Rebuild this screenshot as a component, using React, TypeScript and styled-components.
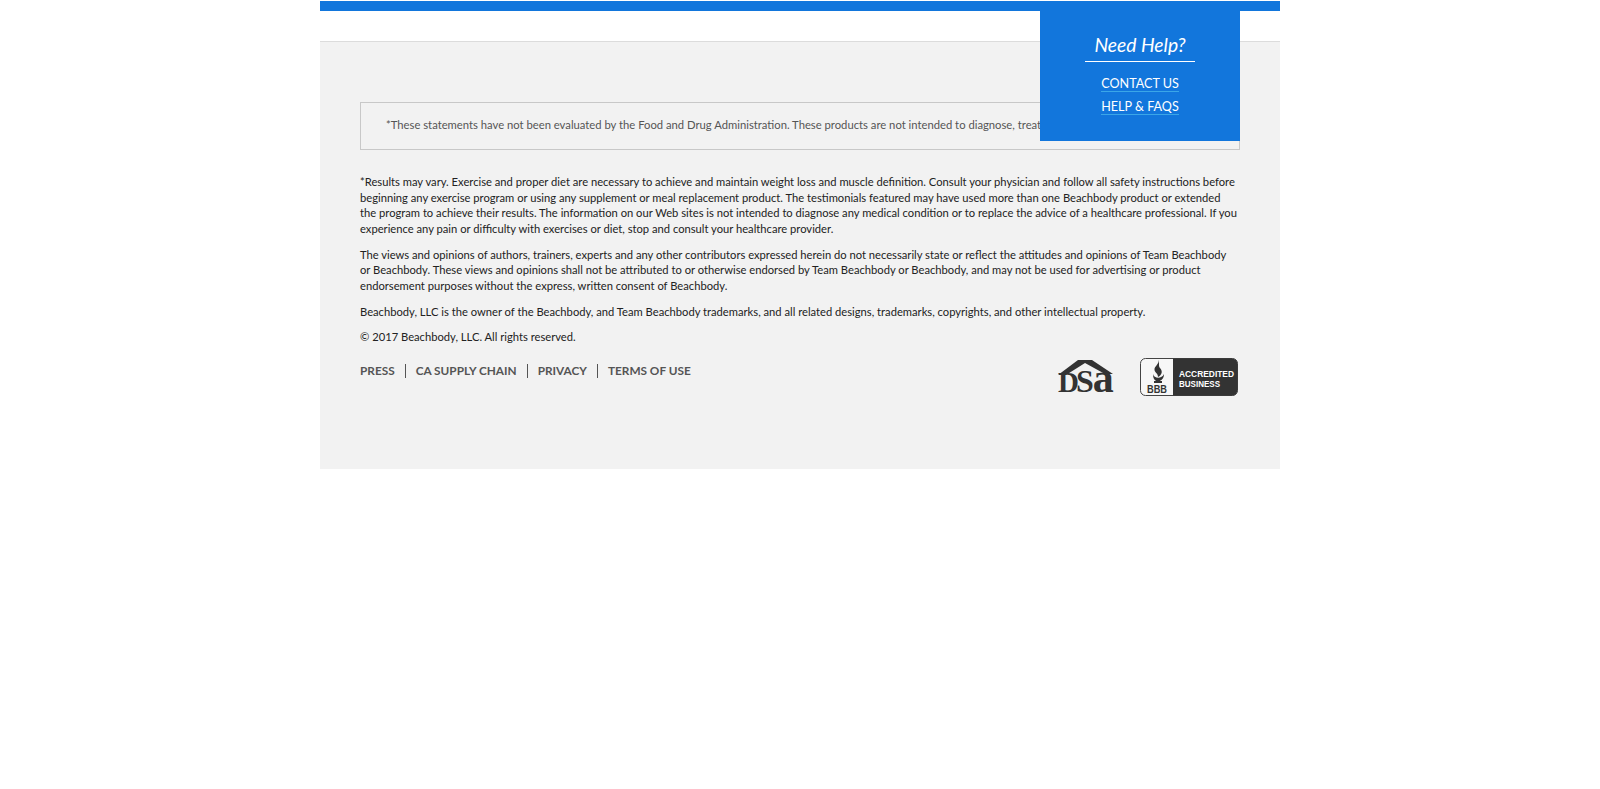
import React from "react";
import styled, { createGlobalStyle } from "styled-components";

const Global = createGlobalStyle`
  html, body { margin: 0; padding: 0; background: #fff; }
  body { font-family: Lato, "Liberation Sans", sans-serif; }
`;
const Page = styled.div`
  width: 960px;
  margin: 1px auto 0;
`;
const TopBar = styled.div`
  height: 10px;
  background: #1276dc;
`;
const Header = styled.div`
  height: 30px;
  background: #fff;
`;
const Footer = styled.footer`
  position: relative;
  box-sizing: border-box;
  height: 428px;
  background: #f2f2f2;
  border-top: 1px solid #dcdcdc;
  padding: 60px 40px 0;
`;
const HelpBox = styled.aside`
  position: absolute;
  top: -31px;
  right: 40px;
  box-sizing: border-box;
  width: 200px;
  height: 130px;
  background: #1276dc;
  color: #fff;
  display: flex;
  flex-direction: column;
  align-items: center;
  padding-top: 23px;
`;
const HelpTitle = styled.div`
  width: 110px;
  height: 27px;
  border-bottom: 1px solid #fff;
  text-align: center;
  font-size: 19.3px;
  line-height: 22px;
  font-style: italic;
`;
const HelpLink = styled.a`
  color: #fff;
  font-size: 12.6px;
  line-height: 15px;
  border-bottom: 1px solid #3aa6e8;
  margin-top: 7px;
  &:first-of-type { margin-top: 14px; }
`;
const Disclaimer = styled.div`
  box-sizing: border-box;
  height: 48px;
  border: 1px solid #c8c8c8;
  padding: 14px 25px;
  font-size: 11.25px;
  line-height: 16px;
  color: #555;
  white-space: nowrap;
  overflow: hidden;
`;
const Legal = styled.div`
  margin-top: 24px;
  padding-right: 3px;
  color: #222;
  font-size: 11.2px;
  line-height: 15.7px;
`;
const Para = styled.p`
  margin: 0 0 9.8px;
`;
const BottomRow = styled.div`
  display: flex;
  justify-content: space-between;
  margin-top: 13px;
`;
const Nav = styled.nav`
  display: flex;
  align-items: center;
  height: 14px;
  margin-top: 6px;
`;
const NavLink = styled.a<{ $first?: boolean }>`
  font-size: 11.8px;
  font-weight: 700;
  line-height: 14px;
  color: #555;
  padding: 0 10px;
  ${(p) => (p.$first ? "padding-left: 0;" : "border-left: 1px solid #555;")}
`;
const Badges = styled.div`
  display: flex;
  align-items: flex-start;
  gap: 21px;
  padding-right: 2px;
`;

const DsaLogo = () => (
  <svg width="62" height="52" viewBox="0 0 62 52">
    <path d="M1 17 L21 2 H35 L56 16 H48 L28 5 L9 17Z" fill="#333" />
    <text x="1" y="34" fontFamily="Liberation Serif, serif" fontWeight="700" fill="#333" fontSize="29">
      D<tspan dx="-3" fontSize="32">S</tspan><tspan dx="-1" fontSize="42">a</tspan>
    </text>
  </svg>
);
const BbbLogo = () => (
  <svg width="98" height="38" viewBox="0 0 98 38">
    <rect x="0.5" y="0.5" width="97" height="37" rx="5" fill="#f7f7f7" stroke="#444" />
    <path d="M33 0.5 H92 a5.5 5.5 0 0 1 5.5 5.5 V32 a5.5 5.5 0 0 1 -5.5 5.5 H33Z" fill="#333" />
    <path d="M18 2 C20 6 14 8 14.5 12 C15 15 18 15 18 19 C22 17 23 13 20 10 C18 8 20 5 18 2Z" fill="#333" />
    <path d="M13 16 C14 21 22 21 24 16 C24 21 21 22 20 23 H22 V25 H14 V23 H16 C15 22 13 21 13 16Z" fill="#333" />
    <text x="7" y="35" fontFamily="Liberation Sans, sans-serif" fontWeight="700" fontSize="10" fill="#333" textLength="20" lengthAdjust="spacingAndGlyphs">BBB</text>
    <g fontFamily="Liberation Sans, sans-serif" fontWeight="700" fontSize="8.4" fill="#fff">
      <text x="39" y="18.5" textLength="55" lengthAdjust="spacingAndGlyphs">ACCREDITED</text>
      <text x="39" y="28.5" textLength="41" lengthAdjust="spacingAndGlyphs">BUSINESS</text>
    </g>
  </svg>
);

export default function App() {
  return (
    <Page>
      <Global />
      <TopBar />
      <Header />
      <Footer>
        <HelpBox>
          <HelpTitle>Need Help?</HelpTitle>
          <HelpLink>CONTACT US</HelpLink>
          <HelpLink>HELP &amp; FAQS</HelpLink>
        </HelpBox>
        <Disclaimer>*These statements have not been evaluated by the Food and Drug Administration. These products are not intended to diagnose, treat, cure, or prevent any disease.</Disclaimer>
        <Legal>
          <Para>*Results may vary. Exercise and proper diet are necessary to achieve and maintain weight loss and muscle definition. Consult your physician and follow all safety instructions before beginning any exercise program or using any supplement or meal replacement product. The testimonials featured may have used more than one Beachbody product or extended the program to achieve their results. The information on our Web sites is not intended to diagnose any medical condition or to replace the advice of a healthcare professional. If you experience any pain or difficulty with exercises or diet, stop and consult your healthcare provider.</Para>
          <Para>The views and opinions of authors, trainers, experts and any other contributors expressed herein do not necessarily state or reflect the attitudes and opinions of Team Beachbody or Beachbody. These views and opinions shall not be attributed to or otherwise endorsed by Team Beachbody or Beachbody, and may not be used for advertising or product endorsement purposes without the express, written consent of Beachbody.</Para>
          <Para>Beachbody, LLC is the owner of the Beachbody, and Team Beachbody trademarks, and all related designs, trademarks, copyrights, and other intellectual property.</Para>
          <Para>© 2017 Beachbody, LLC. All rights reserved.</Para>
        </Legal>
        <BottomRow>
          <Nav>
            <NavLink $first>PRESS</NavLink>
            <NavLink>CA SUPPLY CHAIN</NavLink>
            <NavLink>PRIVACY</NavLink>
            <NavLink>TERMS OF USE</NavLink>
          </Nav>
          <Badges>
            <DsaLogo />
            <BbbLogo />
          </Badges>
        </BottomRow>
      </Footer>
    </Page>
  );
}
